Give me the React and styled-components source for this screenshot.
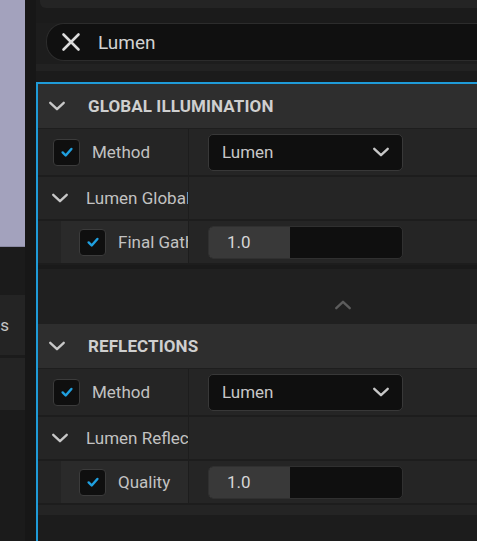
import React from 'react'
import styled, { createGlobalStyle } from 'styled-components'

const GlobalStyle = createGlobalStyle`
  html, body { margin: 0; padding: 0; background: #1b1b1b; overflow: hidden; }
  body { font-family: Roboto, "Noto Sans", "Liberation Sans", sans-serif; }
`

const Page = styled.div`
  display: flex;
  width: 477px;
  height: 541px;
  overflow: hidden;
  background: #1b1b1b;
`

const LeftStrip = styled.div`
  width: 25px;
  display: flex;
  flex-direction: column;
  flex-shrink: 0;
`

const Viewport = styled.div`
  height: 247px;
  background: #a3a2bd;
  border-bottom: 1px solid #8a89a3;
  box-sizing: border-box;
`

const LeftGap = styled.div`
  height: ${p => p.h}px;
`

const LeftPanel = styled.div`
  height: ${p => p.h}px;
  background: #242424;
  display: flex;
  align-items: center;
  justify-content: flex-end;
  overflow: hidden;
  color: #c4c4c4;
  font-size: 17px;
  padding-right: 16px;
  box-sizing: border-box;
`

const Gutter = styled.div`
  width: 11px;
  flex-shrink: 0;
  background: #171717;
`

const Main = styled.div`
  flex: 1;
  display: flex;
  flex-direction: column;
  min-width: 0;
`

const TopArea = styled.div`
  height: 82px;
  display: flex;
  flex-direction: column;
`

const TopBar = styled.div`
  height: 8px;
  margin-left: 4px;
  background: #242424;
  border-bottom-left-radius: 6px;
`

const SearchWrap = styled.div`
  margin-top: 15px;
  padding-left: 10px;
  padding-bottom: 10px;
  background: linear-gradient(#1d1d1d 0 85%, #222 85% 100%);
`

const SearchBox = styled.div`
  height: 36px;
  background: #101010;
  border: 1px solid #2c2c2c;
  border-right: none;
  border-radius: 18px 0 0 18px;
  display: flex;
  align-items: center;
  gap: 16px;
  padding-left: 13px;
  color: #d2d2d2;
  font-size: 19px;
`

const Panel = styled.div`
  flex: 1;
  border-top: 2px solid #1f9bd8;
  border-left: 2px solid #1f9bd8;
  display: flex;
  flex-direction: column;
  background: #1c1c1c;
`

const Header = styled.div`
  height: ${p => p.h}px;
  background: #2e2e2e;
  display: flex;
  align-items: center;
  gap: 22px;
  padding-left: 10px;
  color: #cfcfcf;
  font-weight: 700;
  font-size: 17px;
  letter-spacing: 0.1px;
  box-sizing: border-box;
  border-bottom: 1px solid #1e1e1e;
`

const Row = styled.div`
  height: ${p => p.h}px;
  display: flex;
  background: #252525;
  border-bottom: 2px solid #1d1d1d;
  box-sizing: border-box;
`

const Indent = styled.div`
  width: 23px;
  flex-shrink: 0;
  background: #242424;
`

const NameCell = styled.div`
  width: ${p => p.w}px;
  flex-shrink: 0;
  display: flex;
  align-items: center;
  gap: ${p => p.gap || 12}px;
  padding-left: ${p => p.pad}px;
  box-sizing: border-box;
  overflow: hidden;
  white-space: nowrap;
  color: #c2c2c2;
  font-size: 17px;
  background: ${p => p.bg || 'transparent'};
  border-right: 1px solid #1d1d1d;
`

const ValueCell = styled.div`
  flex: 1;
  display: flex;
  align-items: center;
  padding-left: 19px;
`

const CheckBox = styled.div`
  width: 27px;
  height: 27px;
  box-sizing: border-box;
  border: 1px solid #3b3b3b;
  border-radius: 4px;
  background: #0f0f0f;
  display: flex;
  align-items: center;
  justify-content: center;
  flex-shrink: 0;
`

const Dropdown = styled.div`
  width: 195px;
  height: 37px;
  box-sizing: border-box;
  background: #0f0f0f;
  border: 1px solid #383838;
  border-radius: 5px;
  display: flex;
  align-items: center;
  justify-content: space-between;
  padding: 0 12px 0 13px;
  color: #c8c8c8;
  font-size: 17px;
`

const Slider = styled.div`
  width: 195px;
  height: 33px;
  box-sizing: border-box;
  background: #0f0f0f;
  border: 1px solid #303030;
  border-radius: 5px;
  display: flex;
  overflow: hidden;
`

const SliderFill = styled.div`
  width: 81px;
  background: #393939;
  color: #d6d6d6;
  font-size: 17px;
  display: flex;
  align-items: center;
  padding-left: 18px;
  box-sizing: border-box;
`

const Collapser = styled.div`
  height: 59px;
  background: #202020;
  border-top: 4px solid #1a1a1a;
  box-sizing: border-box;
  display: flex;
  align-items: flex-start;
  justify-content: center;
  padding: 27px 0 0 170px;
`

const Band = styled.div`
  height: 10px;
  background: #242424;
`

const Chevron = ({ size = 18, color = '#c8c8c8', up }) => (
  <svg width={size} height={size} viewBox="0 0 16 16" style={{ flexShrink: 0 }}>
    <path d={up ? 'M2 10.8 L8 5.2 L14 10.8' : 'M2 5.2 L8 10.8 L14 5.2'} fill="none" stroke={color} strokeWidth="2.1" strokeLinecap="round" strokeLinejoin="round" />
  </svg>
)

const Check = () => (
  <svg width="14" height="14" viewBox="0 0 16 16">
    <path d="M3 8.5 L6.5 12 L13 4.5" fill="none" stroke="#1fa0e0" strokeWidth="2.8" strokeLinecap="round" strokeLinejoin="round" />
  </svg>
)

const CloseIcon = () => (
  <svg width="22" height="22" viewBox="0 0 22 22" style={{ flexShrink: 0 }}>
    <path d="M3.5 3.5 L18.5 18.5 M18.5 3.5 L3.5 18.5" stroke="#dcdcdc" strokeWidth="2.6" strokeLinecap="round" />
  </svg>
)

const Section = ({ title, group, child }) => (
  <>
    <Header h={45}>
      <Chevron />
      {title}
    </Header>
    <Row h={48}>
      <NameCell w={151} pad={15}>
        <CheckBox><Check /></CheckBox>
        Method
      </NameCell>
      <ValueCell>
        <Dropdown>
          Lumen
          <Chevron />
        </Dropdown>
      </ValueCell>
    </Row>
    <Row h={44}>
      <NameCell w={151} pad={13} gap={17}>
        <Chevron />
        {group}
      </NameCell>
      <ValueCell />
    </Row>
    <Row h={44}>
      <Indent />
      <NameCell w={128} pad={18} bg="#2a2a2a">
        <CheckBox><Check /></CheckBox>
        {child}
      </NameCell>
      <ValueCell>
        <Slider>
          <SliderFill>1.0</SliderFill>
        </Slider>
      </ValueCell>
    </Row>
  </>
)

export default function App() {
  return (
    <Page>
      <GlobalStyle />
      <LeftStrip>
        <Viewport />
        <LeftGap h={48} />
        <LeftPanel h={60}>s</LeftPanel>
        <LeftGap h={3} />
        <LeftPanel h={52} />
      </LeftStrip>
      <Gutter />
      <Main>
        <TopArea>
          <TopBar />
          <SearchWrap>
            <SearchBox>
              <CloseIcon />
              Lumen
            </SearchBox>
          </SearchWrap>
        </TopArea>
        <Panel>
          <Section title="GLOBAL ILLUMINATION" group="Lumen Global Illumination" child="Final Gather Quality" />
          <Collapser>
            <Chevron color="#5c5c5c" up />
          </Collapser>
          <Section title="REFLECTIONS" group="Lumen Reflections" child="Quality" />
          <Band />
        </Panel>
      </Main>
    </Page>
  )
}
